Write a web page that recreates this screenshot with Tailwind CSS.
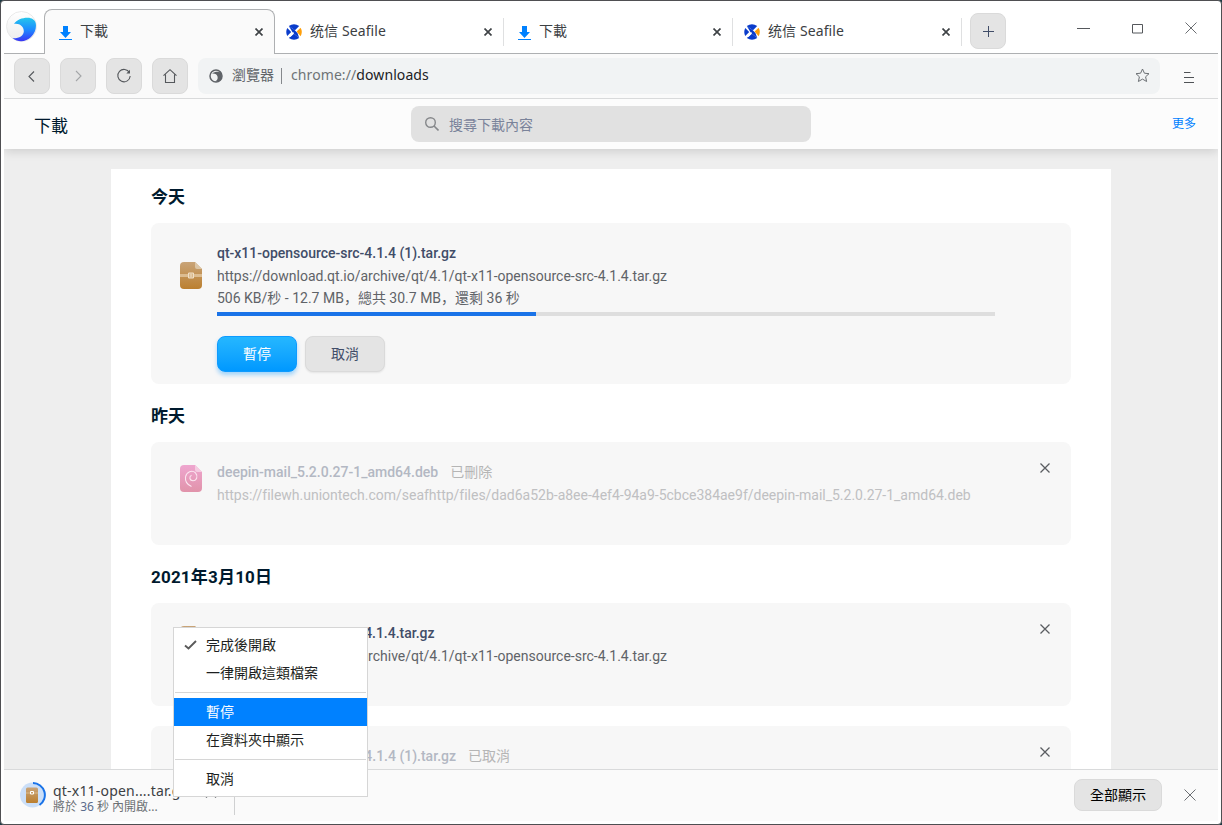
<!DOCTYPE html>
<html lang="zh-Hant">
<head>
<meta charset="utf-8">
<title>下載</title>
<script src="https://cdn.jsdelivr.net/npm/@tailwindcss/browser@4"></script>
</head>
<body class="bg-[#1d3b45] font-['Noto_Sans','Noto_Sans_CJK_TC',sans-serif] text-[14px] text-[#3c4043]">
<svg class="absolute size-0">
  <defs>
    <linearGradient id="gBlue" x1="0" y1="0" x2="0" y2="1"><stop offset="0" stop-color="#25c7ec"/><stop offset=".5" stop-color="#1d8cff"/><stop offset="1" stop-color="#3a35f5"/></linearGradient>
    <linearGradient id="gOrb" x1="0" y1="0" x2="0" y2="1"><stop offset="0" stop-color="#ffffff"/><stop offset="1" stop-color="#ececec"/></linearGradient>
    <linearGradient id="gBox" x1="0" y1="0" x2="0" y2="1"><stop offset="0" stop-color="#c9a478"/><stop offset="1" stop-color="#bb7f2f"/></linearGradient>
    <linearGradient id="gDeb" x1="0" y1="0" x2="0" y2="1"><stop offset="0" stop-color="#eea6cf"/><stop offset="1" stop-color="#e193aa"/></linearGradient>
    <symbol id="dl" viewBox="0 0 13 14"><path d="M4 0h5v6h3L6.500 12 1 6h3z" fill="#0081ff"/><path d="M0 13h13v1H0z" fill="#0081ff"/></symbol>
    <symbol id="sea" viewBox="0 0 16 16"><path d="M2.800 2Q8-1.300 13.200 2L9 6.200z" fill="#0a3ccb"/><path d="M2.800 14Q8 17.300 13.200 14L8 9.800z" fill="#0a3ccb"/><path d="M1.300 4Q-.8 8 1.300 12L5.200 8z" fill="#0a3ccb"/><path d="M2.800 2L8 5.500 11.500 9 13.200 14 7 9z" fill="#0a3ccb"/><path d="M4 12.500L7.500 8.500" stroke="#fff" stroke-width="1.300"/><path d="M14.600 3.800Q17 8 14.600 12.200L10.600 7.600z" fill="#ff9f0a"/></symbol>
    <symbol id="tx" viewBox="0 0 8 8"><path d="M.5.5l7 7M7.500.5l-7 7" stroke="#3f4346" stroke-width="1.700"/></symbol>
    <symbol id="cx" viewBox="0 0 10 10"><path d="M.5.5l9 9M9.500.5l-9 9" stroke="#5a5d61" stroke-width="1.250"/></symbol>
    <symbol id="wx" viewBox="0 0 12 12"><path d="M.5.5l11 11M11.500.5l-11 11" stroke="#6b6e72" stroke-width="1"/></symbol>
    <symbol id="box" viewBox="0 0 22 27"><path d="M4 0h11l7 7v16q0 4-4 4H4q-4 0-4-4V4q0-4 4-4z" fill="url(#gBox)"/><path d="M15 0l7 7h-5q-2 0-2-2z" fill="#dcc6a6"/><path d="M0 12h22v3H0z" fill="#dcbc90"/><path d="M8.500 11h5v5h-5z" fill="#d8b88b" stroke="#f0dfc6"/><path d="M11 12v3" stroke="#f0dfc6"/></symbol>
    <symbol id="deb" viewBox="0 0 22 27"><path d="M4 0h11l7 7v16q0 4-4 4H4q-4 0-4-4V4q0-4 4-4z" fill="url(#gDeb)"/><path d="M15 0l7 7h-5q-2 0-2-2z" fill="#f5cbe1"/><path d="M11.500 21.500C7 19.500 5 16 5.500 12 6.500 7 12 4.500 15.500 7.800c3 3.500 1 8-2.500 8-3.500-.3-4.200-4-1.500-5.500" fill="none" stroke="#fbe6f0" stroke-width="1.100"/></symbol>
  </defs>
</svg>

<div class="relative flex h-[825px] w-[1222px] flex-col overflow-hidden rounded-[4px] border border-[#4f4f52] bg-white px-[3px] pb-[3px]">

  <!-- Tab strip -->
  <div class="flex h-[53px] shrink-0">
    <div class="flex w-10 shrink-0 items-start border-b border-[#aeb0b2] pt-[10px] pl-[2px]">
      <svg class="size-[31px]" viewBox="0 0 31 31"><circle cx="15.500" cy="15.500" r="15" fill="url(#gOrb)" stroke="#e4e4e4" stroke-width=".8"/><path d="M8 13C10.500 8.500 17 6.500 22 6.700c3.500.1 7 2 7.700 5.300 1 5-.7 10-4.700 14-4.500 4.500-12 6-18.500 1.300 6.500.4 11-2.300 11.300-6.800.2-4.500-4-8.500-9.800-7.500z" fill="url(#gBlue)"/></svg>
    </div>
    <div class="mt-2 flex h-[45px] w-[231px] shrink-0 items-start rounded-t-[8px] border border-b-0 border-[#aeb0b2] bg-[#fafafa] pt-[11px] pr-[11px] pl-[14px]">
      <svg class="mt-[5px] h-[14px] w-[13px]"><use href="#dl"/></svg>
      <span class="ml-2 flex-1 leading-5">下載</span>
      <svg class="mt-[7px] size-2"><use href="#tx"/></svg>
    </div>
    <div class="flex flex-1 border-b border-[#aeb0b2]">
      <div class="mt-[17px] flex h-7 w-[229px] items-start border-r border-[#dfe0e1] pt-[3px] pr-[11px] pl-[11px]">
        <svg class="mt-[3px] size-4"><use href="#sea"/></svg>
        <span class="ml-2 flex-1 leading-5 tracking-[0.1px]" lang="zh-Hans">统信 Seafile</span>
        <svg class="mt-[7px] size-2"><use href="#tx"/></svg>
      </div>
      <div class="mt-[17px] flex h-7 w-[229px] items-start border-r border-[#dfe0e1] pt-[3px] pr-[11px] pl-[14px]">
        <svg class="mt-[5px] h-[14px] w-[13px]"><use href="#dl"/></svg>
        <span class="ml-2 flex-1 leading-5">下載</span>
        <svg class="mt-[7px] size-2"><use href="#tx"/></svg>
      </div>
      <div class="mt-[17px] flex h-7 w-[229px] items-start border-r border-[#dfe0e1] pt-[3px] pr-[11px] pl-[11px]">
        <svg class="mt-[3px] size-4"><use href="#sea"/></svg>
        <span class="ml-2 flex-1 leading-5 tracking-[0.1px]" lang="zh-Hans">统信 Seafile</span>
        <svg class="mt-[7px] size-2"><use href="#tx"/></svg>
      </div>
      <div class="mt-3 ml-2 flex size-9 items-center justify-center rounded-[8px] border border-[#dadada] bg-[#e4e4e4]">
        <svg class="mt-[1px] ml-[1px] size-[11px]" viewBox="0 0 11 11"><path d="M0 5.500h11M5.500 0v11" stroke="#414d68"/></svg>
      </div>
      <div class="ml-auto flex items-start pt-[21px] pr-[21px]">
        <svg class="mt-[6px] h-px w-[13px]" viewBox="0 0 13 1"><path d="M0 0h13v1H0z" fill="#55585c"/></svg>
        <svg class="mt-[2px] ml-[42px] h-[10px] w-[11px]" viewBox="0 0 11 10"><path d="M.5.5h10v8.500H.5z" fill="none" stroke="#55585c"/></svg>
        <svg class="ml-[42px] size-3"><use href="#wx"/></svg>
      </div>
    </div>
  </div>

  <!-- Toolbar -->
  <div class="flex h-[45px] shrink-0 items-start border-b border-[#d9dadb] bg-[#fafafa] pt-1 pl-[10px]">
    <div class="flex gap-[10px]">
      <div class="flex size-9 items-center justify-center rounded-[8px] border border-[#dadada] bg-[#e4e4e4]"><svg class="size-4" viewBox="0 0 16 16" fill="none" stroke="#55585c" stroke-width="1.100"><path d="M10 3.500L5 8.500l5 5"/></svg></div>
      <div class="flex size-9 items-center justify-center rounded-[8px] border border-[#dadada] bg-[#e4e4e4]"><svg class="size-4" viewBox="0 0 16 16" fill="none" stroke="#a4a6a8" stroke-width="1.100"><path d="M6 3l5 5-5 5"/></svg></div>
      <div class="flex size-9 items-center justify-center rounded-[8px] border border-[#dadada] bg-[#e4e4e4]"><svg class="size-4" viewBox="0 0 16 16" fill="none" stroke="#55585c" stroke-width="1.100"><path d="M13.500 4.700A6.200 6.200 0 1 0 14.200 8"/><path d="M14 1.800v3.700h-3.700z" fill="#55585c" stroke="none"/></svg></div>
      <div class="flex size-9 items-center justify-center rounded-[8px] border border-[#dadada] bg-[#e4e4e4]"><svg class="size-4" viewBox="0 0 16 16" fill="none" stroke="#55585c" stroke-width="1.100"><path d="M1.500 7.700L8 1.700l6.500 6M3.500 6.500v8h9v-8"/></svg></div>
    </div>
    <div class="ml-[10px] flex h-9 w-[962px] items-start rounded-[8px] bg-[#f1f3f4] pl-[11px]">
      <svg class="mt-[11px] size-[14px]" viewBox="0 0 14 14"><circle cx="7" cy="7" r="6" fill="none" stroke="#5f6368" stroke-width="1.500"/><path d="M3 4.500C5.500 2.500 9 2 12 3.500c1.500 3 1 7-2 9H6c2.500-1.200 3-3 2.500-5C8 5.500 6 4.200 3 4.500z" fill="#5f6368"/></svg>
      <span class="mt-[7px] ml-[9px] leading-5 text-[#5f6368]">瀏覽器</span>
      <span class="mt-[10px] ml-[7px] h-4 w-px bg-[#85888c]"></span>
      <span class="mt-[7px] ml-[9px] flex-1 leading-5 tracking-[0.09px] text-[#6f7377]">chrome://<span class="text-[#202124]">downloads</span></span>
      <svg class="mt-[10px] mr-[10px] size-[15px]" viewBox="0 0 15 15"><path d="M7.500 1l1.900 4.200 4.600.5-3.400 3.100 1 4.700-4.100-2.400-4.100 2.400 1-4.700L1 5.700l4.600-.5z" fill="none" stroke="#6c7074"/></svg>
    </div>
    <svg class="mt-[14px] ml-6 h-[11px] w-[10px]" viewBox="0 0 10 11"><path d="M0 .5h6.500M0 5.500h10M0 10.500h10" stroke="#4f5256"/></svg>
  </div>

  <!-- Page header -->
  <div class="relative z-10 flex h-[50px] shrink-0 items-start bg-[#fcfcfc] pt-[7px] pr-[22px] pl-[30px] shadow-[0_2px_10px_rgba(0,0,0,0.15)] [clip-path:inset(0_0_-20px_0)]">
    <span class="mt-[8px] w-[377px] text-[17px] leading-6 text-[#001a2e]">下載</span>
    <div class="flex h-9 w-[400px] items-start rounded-[8px] bg-[#e1e1e1] pl-[14px]">
      <svg class="mt-[11px] size-[14px]" viewBox="0 0 14 14"><circle cx="5.500" cy="5.500" r="4.800" fill="none" stroke="#86888b" stroke-width="1.400"/><path d="M9 9l4.500 4.500" stroke="#86888b" stroke-width="1.600"/></svg>
      <span class="mt-[9px] ml-[10px] leading-5 text-[#7a839a]">搜尋下載內容</span>
    </div>
    <span class="mt-[8px] ml-auto text-[12px] leading-5 text-[#0081ff]">更多</span>
  </div>

  <!-- Downloads page -->
  <div class="flex-1 overflow-hidden bg-[#eee] pt-5 font-[Roboto,'Noto_Sans_CJK_TC',sans-serif]">
    <div class="mx-auto flex h-[760px] w-[1000px] flex-col bg-white px-10">
      <h2 class="mt-[16px] h-6 text-[17px] leading-6 font-bold text-[#001a2e]">今天</h2>
      <div class="mt-[14px] flex h-[161px] rounded-[8px] bg-[#f7f7f7] pt-5 pl-[29px]">
        <svg class="mt-[19px] h-[27px] w-[22px]"><use href="#box"/></svg>
        <div class="ml-[15px] w-[778px]">
          <div class="leading-5 font-medium tracking-[-0.01px] text-[#414d68]">qt-x11-opensource-src-4.1.4 (1).tar.gz</div>
          <div class="mt-[3px] leading-5 text-[#5f6368]">https://download.qt.io/archive/qt/4.1/qt-x11-opensource-src-4.1.4.tar.gz</div>
          <div class="mt-[2px] font-[Roboto,'Noto_Sans_CJK_SC',sans-serif] leading-5 text-[#5f6368]" lang="zh-Hans">506 KB/秒 - 12.7 MB，總共 30.7 MB，還剩 36 秒</div>
          <div class="mt-1 h-1 bg-[#dedede]"><div class="h-1 bg-[#1a73e8]" style="width:41%"></div></div>
          <div class="mt-5 flex gap-2">
            <div class="flex h-9 w-20 items-center justify-center rounded-[8px] border border-[#0e9bff] bg-linear-to-b from-[#25b7ff] to-[#0098ff] text-white shadow-[0_3px_4px_rgba(0,145,255,0.35)]">暫停</div>
            <div class="flex h-9 w-20 items-center justify-center rounded-[8px] border border-[#dadada] bg-[#e4e4e4] text-[#414d68] shadow-[0_1px_2px_rgba(0,0,0,0.08)]">取消</div>
          </div>
        </div>
      </div>

      <h2 class="mt-5 h-6 text-[17px] leading-6 font-bold text-[#001a2e]">昨天</h2>
      <div class="mt-[14px] flex h-[103px] rounded-[8px] bg-[#f7f7f7] pt-5 pr-[21px] pl-[29px]">
        <svg class="mt-[3px] h-[27px] w-[22px]"><use href="#deb"/></svg>
        <div class="ml-[15px] flex-1">
          <div class="leading-5 font-medium text-[#b3b8c3]">deepin-mail_5.2.0.27-1_amd64.deb<span class="ml-[12px] font-normal text-[#b5b5b5]">已刪除</span></div>
          <div class="mt-[3px] leading-5 tracking-[-0.01px] text-[#bfc0c2]">https://filewh.uniontech.com/seafhttp/files/dad6a52b-a8ee-4ef4-94a9-5cbce384ae9f/deepin-mail_5.2.0.27-1_amd64.deb</div>
        </div>
        <svg class="mt-[1px] size-[10px]"><use href="#cx"/></svg>
      </div>

      <h2 class="mt-5 h-6 text-[17px] leading-6 font-bold tracking-[0.2px] text-[#001a2e]">2021年3月10日</h2>
      <div class="mt-[14px] flex h-[103px] rounded-[8px] bg-[#f7f7f7] pt-5 pr-[21px] pl-[29px]">
        <svg class="mt-[3px] h-[27px] w-[22px]"><use href="#box"/></svg>
        <div class="ml-[15px] flex-1">
          <div class="leading-5 font-medium tracking-[-0.02px] text-[#414d68]">qt-x11-opensource-src-4.1.4.tar.gz</div>
          <div class="mt-[3px] leading-5 text-[#5f6368]">https://download.qt.io/archive/qt/4.1/qt-x11-opensource-src-4.1.4.tar.gz</div>
        </div>
        <svg class="mt-[1px] size-[10px]"><use href="#cx"/></svg>
      </div>
      <div class="mt-5 flex h-[103px] rounded-[8px] bg-[#f7f7f7] pt-5 pr-[21px] pl-[29px]">
        <svg class="mt-[3px] h-[27px] w-[22px] opacity-50"><use href="#box"/></svg>
        <div class="ml-[15px] flex-1 leading-5 font-medium tracking-[-0.01px] text-[#b3b8c3]">qt-x11-opensource-src-4.1.4 (1).tar.gz<span class="ml-[12px] font-normal text-[#b5b5b5]">已取消</span></div>
        <svg class="mt-[1px] size-[10px]"><use href="#cx"/></svg>
      </div>
    </div>
  </div>

  <!-- Download shelf -->
  <div class="flex h-[52px] shrink-0 items-start border-t border-[#d9dadb] bg-[#fafafa] pl-4">
    <svg class="mt-[12px] size-[26px]" viewBox="0 0 26 26"><circle cx="12.500" cy="13" r="12.500" fill="#cbdff8"/><path d="M13 1a12 12 0 0 1 6.500 22" fill="none" stroke="#1a73e8" stroke-width="2"/><rect x="6" y="5.500" width="12" height="15.500" rx="1.500" fill="url(#gBox)"/><path d="M6 10.500h12v1H6z" fill="#d9b98c"/><path d="M10.500 9.500h3v2.500h-3z" fill="#c79c62" stroke="#fff" stroke-width="1"/></svg>
    <div class="mt-[11px] ml-[7px] w-[135px]">
      <div class="leading-5 tracking-[0.2px] whitespace-nowrap">qt-x11-open....tar.gz</div>
      <div class="-mt-[2px] text-[12px] leading-4 whitespace-nowrap text-[#6d7175]">將於 <span class="text-[#5a6b8c]">36</span> 秒 內開啟...</div>
    </div>
    <svg class="mt-[21px] ml-[17px] h-[7px] w-[12px]" viewBox="0 0 12 7"><path d="M1 6.500l5-5 5 5" fill="none" stroke="#5f6368" stroke-width="1.300"/></svg>
    <span class="mt-2 ml-[17px] h-[37px] w-px bg-[#cfd0d1]"></span>
    <div class="mt-[9px] ml-auto flex h-8 w-[88px] items-center justify-center rounded-[8px] border border-[#dadada] bg-[#e4e4e4] pb-[2px] text-black">全部顯示</div>
    <svg class="mt-[19px] mr-[22px] ml-[22px] size-3"><use href="#wx"/></svg>
  </div>

  <!-- Context menu -->
  <div class="absolute top-[626px] left-[172px] z-20 h-[170px] w-[195px] border border-[#d6d6d6] bg-white pt-[3px] leading-7 text-[#1d1f21]">
    <div class="flex h-7 items-center pl-[10px]"><svg class="h-[10px] w-[13px]" viewBox="0 0 13 10"><path d="M1 5.500l3.500 3L12 1" fill="none" stroke="#5a5a5a" stroke-width="1.900"/></svg><span class="ml-[9px]">完成後開啟</span></div>
    <div class="h-7 pl-8">一律開啟這類檔案</div>
    <div class="mx-px mt-[5px] mb-[5px] h-px bg-[#d6d6d6]"></div>
    <div class="h-7 bg-[#0081ff] pl-8 text-white">暫停</div>
    <div class="h-7 pl-8">在資料夾中顯示</div>
    <div class="mx-px mt-[5px] mb-[5px] h-px bg-[#d6d6d6]"></div>
    <div class="h-7 pl-8">取消</div>
  </div>
</div>
</body>
</html>
